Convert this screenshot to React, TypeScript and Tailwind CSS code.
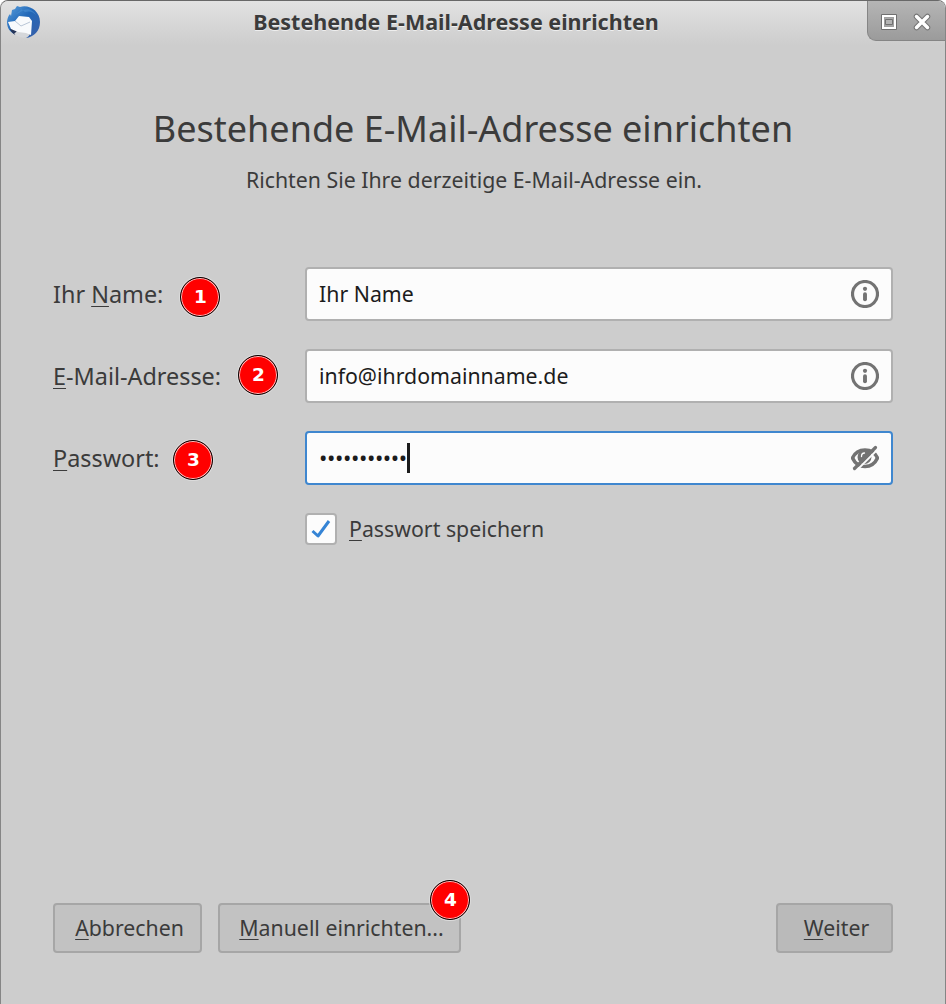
import type { ReactNode } from "react";

function Badge({ value, className }: { value: number; className: string }) {
  return (
    <span
      className={`absolute z-10 flex size-[40px] items-center justify-center rounded-full border border-black bg-[#ff0000] pl-px font-['DejaVu_Sans'] text-[18.5px] leading-none font-bold text-white shadow-[inset_0_0_0_1px_#ffc4c4,0_0_0_1px_#dcdcdc] ${className}`}
    >
      {value}
    </span>
  );
}

// Label with its keyboard shortcut letter underlined.
function AccessLabel({ before = "", letter, after }: { before?: string; letter: string; after: string }) {
  return (
    <span className="whitespace-pre">
      {before}
      <span className="underline decoration-[1px] underline-offset-[3px]">{letter}</span>
      {after}
    </span>
  );
}

function ThunderbirdIcon() {
  return (
    <svg viewBox="0 0 36 36" className="size-9">
      <defs>
        <linearGradient id="bird" x1="0" y1="0" x2="1" y2="1">
          <stop offset="0" stopColor="#5a9fdc" />
          <stop offset="0.45" stopColor="#2268b8" />
          <stop offset="1" stopColor="#3a5fa8" />
        </linearGradient>
      </defs>
      <path
        d="M7 6 10 5 12 2 15 3C24 0 35 7 35 18c0 9-6 15-14 16 2-1 4-3 4-5L12 31C5 29 2 24 2 18c0-2 1-6 3-8l1 2Z"
        fill="url(#bird)"
      />
      <path d="m13 3 4 2-7 6 9-5c5-2 10 1 12 5-4-4-7-4-11-3" fill="#4d94d6" opacity="0.5" />
      <path d="M5 25c1 3 3 4 5 6l3-4-5-3Z" fill="#263559" />
      <path d="M12 27 9 30c4 3 8 4 13 3l3-5Z" fill="#d5d7da" />
      <path d="m14 12 10 1 3 4-1 14-5-2-8-1-7-3-3-7 7-1Z" fill="#f8fafc" />
      <path d="m10 17 6 5 9-4" fill="none" stroke="#b9c6d6" strokeWidth="1" />
    </svg>
  );
}

function InfoIcon() {
  return (
    <svg viewBox="0 0 28 28" className="size-7" fill="none" stroke="#737373" strokeLinecap="round">
      <circle cx="14" cy="14" r="12.5" strokeWidth="3.2" />
      <circle cx="14" cy="8.8" r="2.1" fill="#737373" stroke="none" />
      <path d="M14 14.200v5" strokeWidth="3.900" />
    </svg>
  );
}

function HiddenIcon() {
  return (
    <svg viewBox="0 0 28 28" className="size-7" fill="none" strokeLinecap="round">
      <path d="M1.500 14C4 8.500 9 6 14 6s10 2.500 12.500 8C24 19.500 19 22.500 14 22.500S4 19.500 1.500 14Z" stroke="#737373" strokeWidth="3.600" />
      <circle cx="13.500" cy="13" r="7" fill="#737373" />
      <path d="M10.500 12.500c0-2 1-3.500 3-3.500" stroke="#fcfcfc" strokeWidth="1.300" />
      <path d="M7 25 26 6" stroke="#fcfcfc" strokeWidth="1.800" strokeLinecap="butt" />
      <path d="M3.500 24.500 24.500 3.500" stroke="#737373" strokeWidth="3.200" />
    </svg>
  );
}

function Field({
  label,
  badge,
  icon,
  active = false,
  children
}: {
  label: ReactNode;
  badge: ReactNode;
  icon: ReactNode;
  active?: boolean;
  children: ReactNode;
}) {
  return (
    <div className="relative flex h-[54px] items-center">
      <div className="w-[252px] text-[23.4px] leading-[54px]">{label}</div>
      {badge}
      <div
        className={`flex h-[54px] flex-1 items-center justify-between rounded-[4px] border-2 bg-[#fcfcfc] pr-3 pl-3 text-[21.3px] text-[#1c1c1c] ${
          active ? "border-[#3f87cf]" : "border-[#b0b0b0]"
        }`}
      >
        <div className="flex items-center leading-[48px]">{children}</div>
        {icon}
      </div>
    </div>
  );
}

function DialogButton({ children, className }: { children: ReactNode; className: string }) {
  return (
    <button
      className={`relative flex h-[50px] items-center justify-center rounded-[4px] border-2 border-[#a6a6a6] pl-[4px] text-[21.3px] leading-[44px] ${className}`}
    >
      {children}
    </button>
  );
}

export default function App() {
  return (
    <div className="h-[1004px] w-[946px] overflow-hidden bg-white">
      <div className="flex h-[1010px] w-[946px] flex-col overflow-hidden rounded-t-[8px] border border-[#858585] border-t-[#686868] bg-[#cdcdcd] font-['Noto_Sans',sans-serif] text-[#3b3b3b]">
        <header className="relative flex h-[44px] shrink-0 items-start justify-between bg-linear-to-b from-[#e2e2e2] to-[#cdcdcd]">
          <div className="pt-[3px] pl-[4px]">
            <ThunderbirdIcon />
          </div>
          <h2 className="absolute top-0 right-[34px] left-0 text-center text-[21.5px] leading-[41px] font-bold whitespace-nowrap [text-shadow:0_1px_0_#eeeeee]">
            Bestehende E-Mail-Adresse einrichten
          </h2>
          <div className="relative flex h-[40px] w-[78px] items-center gap-[16px] rounded-bl-[9px] border-b border-l border-[#858585] bg-linear-to-b from-[#b5b5b5] to-[#9b9b9b] pt-[3px] pl-[13px]">
            <svg viewBox="0 0 16 16" className="size-4" fill="none">
              <path d="M.5.5h15v15H.5Z" stroke="#707070" />
              <path d="M2 2h12v12H2Z" stroke="#fff" strokeWidth="2" />
              <path d="M3.500 3.500h9v9h-9Z" stroke="#a0a0a0" />
              <path d="M4.500 5.500h7v5h-7Z" fill="#b4b4b4" stroke="#707070" />
            </svg>
            <svg viewBox="0 0 18 18" className="size-[18px]" fill="none" strokeLinecap="round">
              <path d="m3.500 3.500 11 11m0-11-11 11" stroke="#747474" strokeWidth="5.500" />
              <path d="m3.500 3.500 11 11m0-11-11 11" stroke="#fff" strokeWidth="3.500" />
            </svg>
          </div>
        </header>

        <main className="flex flex-1 flex-col px-[52px]">
          <h1 className="mt-[57px] text-center text-[36px] leading-[54px] whitespace-nowrap">
            Bestehende E-Mail-Adresse einrichten
          </h1>
          <p className="mt-[8px] pl-[2px] text-center text-[21.3px] leading-[31px] whitespace-nowrap">
            Richten Sie Ihre derzeitige E-Mail-Adresse ein.
          </p>

          <div className="mt-[72px] flex flex-col gap-[28px]">
            <Field
              label={<AccessLabel before="Ihr " letter="N" after="ame:" />}
              badge={<Badge value={1} className="top-[10px] left-[127px]" />}
              icon={<InfoIcon />}
            >
              Ihr Name
            </Field>
            <Field
              label={<AccessLabel letter="E" after="-Mail-Adresse:" />}
              badge={<Badge value={2} className="top-[6px] left-[185px]" />}
              icon={<InfoIcon />}
            >
              info@ihrdomainname.de
            </Field>
            <Field
              label={<AccessLabel letter="P" after="asswort:" />}
              badge={<Badge value={3} className="top-[9px] left-[120px]" />}
              icon={<HiddenIcon />}
              active
            >
              <span className="w-[88px] text-[22.3px] leading-[46px] tracking-[-0.4px]">•••••••••••</span>
              <span className="h-[30px] w-[3px] bg-[#1c1c1c]" />
            </Field>
          </div>

          <div className="mt-[28px] ml-[252px] flex items-center gap-3">
            <span className="flex size-8 items-center justify-center rounded-[4px] border-2 border-[#b0b0b0] bg-[#fcfcfc]">
              <svg viewBox="0 0 20 20" className="size-5" fill="none" stroke="#3584d5">
                <path d="m1.500 12 5.500 5L18 2" strokeWidth="3" strokeLinejoin="round" />
              </svg>
            </span>
            <span className="text-[21.3px] leading-[30px]">
              <AccessLabel letter="P" after="asswort speichern" />
            </span>
          </div>

          <footer className="mt-auto mb-[56px] flex">
            <DialogButton className="w-[149px] bg-[#c2c2c2]">
              <AccessLabel letter="A" after="bbrechen" />
            </DialogButton>
            <DialogButton className="ml-[16px] w-[243px] bg-[#c2c2c2]">
              <AccessLabel letter="M" after="anuell einrichten..." />
              <Badge value={4} className="top-[-25px] right-[-11px]" />
            </DialogButton>
            <DialogButton className="ml-auto w-[117px] bg-[#bababa]">
              <AccessLabel letter="W" after="eiter" />
            </DialogButton>
          </footer>
        </main>
      </div>
    </div>
  );
}
